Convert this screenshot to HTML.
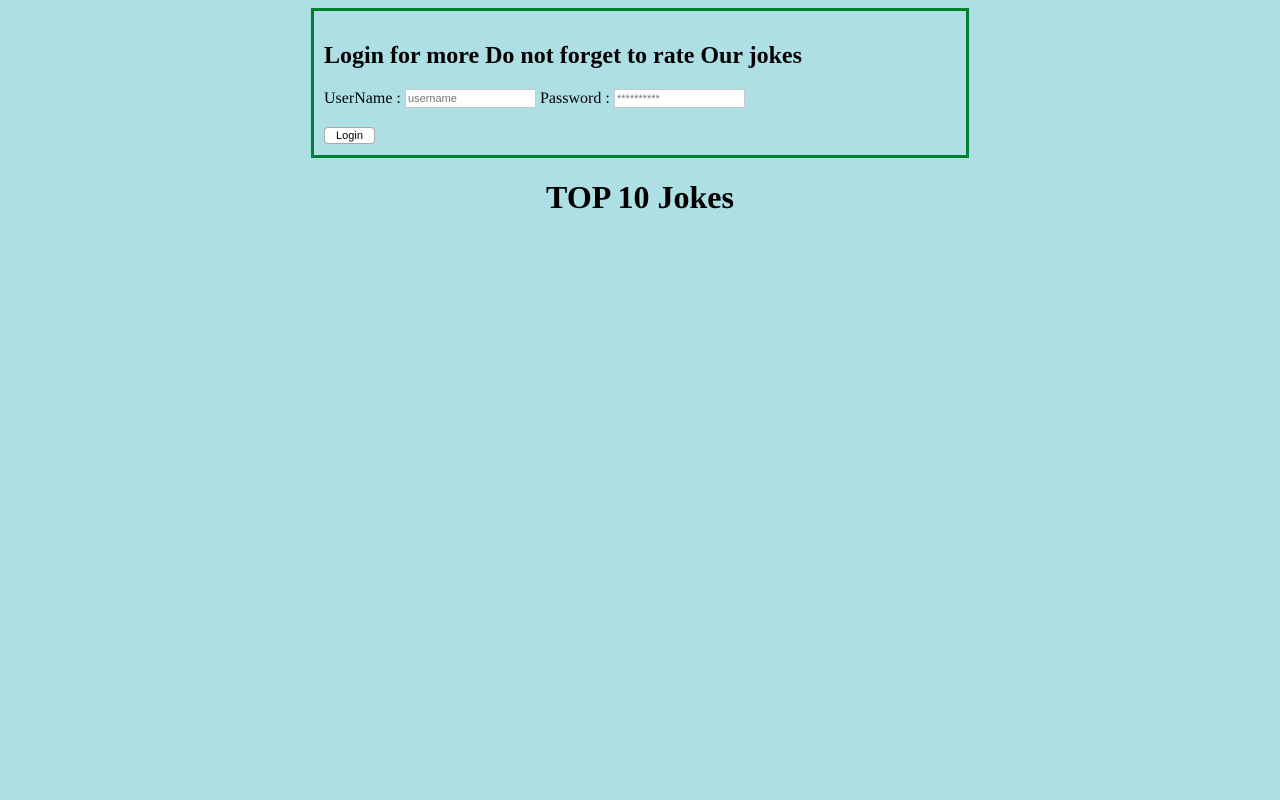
<!DOCTYPE html>
<html><head><style>
body{margin:0;background:#addfe4;font-family:"Liberation Serif",serif;width:1280px;height:800px;position:relative;overflow:hidden}
.box{position:absolute;left:311px;top:8px;width:652px;height:144px;border:3px solid #008030}
.a{position:absolute;white-space:nowrap}
h2{margin:0;font-size:24px;font-weight:bold}
.in{position:absolute;background:#fff;border:1px solid #c8c8c8;box-sizing:border-box;height:19px;font-family:"Liberation Sans",sans-serif;font-size:11px;color:#777;line-height:18px;padding-left:2px}
.btn{position:absolute;left:324px;top:127px;width:51px;height:17px;box-sizing:border-box;background:#fff;border:1px solid #aaa;border-radius:4px;font-family:"Liberation Sans",sans-serif;font-size:11px;text-align:center;line-height:16px}
h1{position:absolute;left:0;width:1280px;top:179px;margin:0;text-align:center;font-size:32px;font-weight:bold}
</style></head><body>
<div class="box"></div>
<h2 class="a" style="left:324px;top:43px">Login for more Do not forget to rate Our jokes</h2>
<div class="a" style="left:324px;top:90px;font-size:16px">UserName :</div>
<div class="in" style="left:405px;top:89px;width:131px">username</div>
<div class="a" style="left:540px;top:90px;font-size:16px">Password :</div>
<div class="in" style="left:614px;top:89px;width:131px">**********</div>
<div class="btn">Login</div>
<h1>TOP 10 Jokes</h1>
</body></html>
